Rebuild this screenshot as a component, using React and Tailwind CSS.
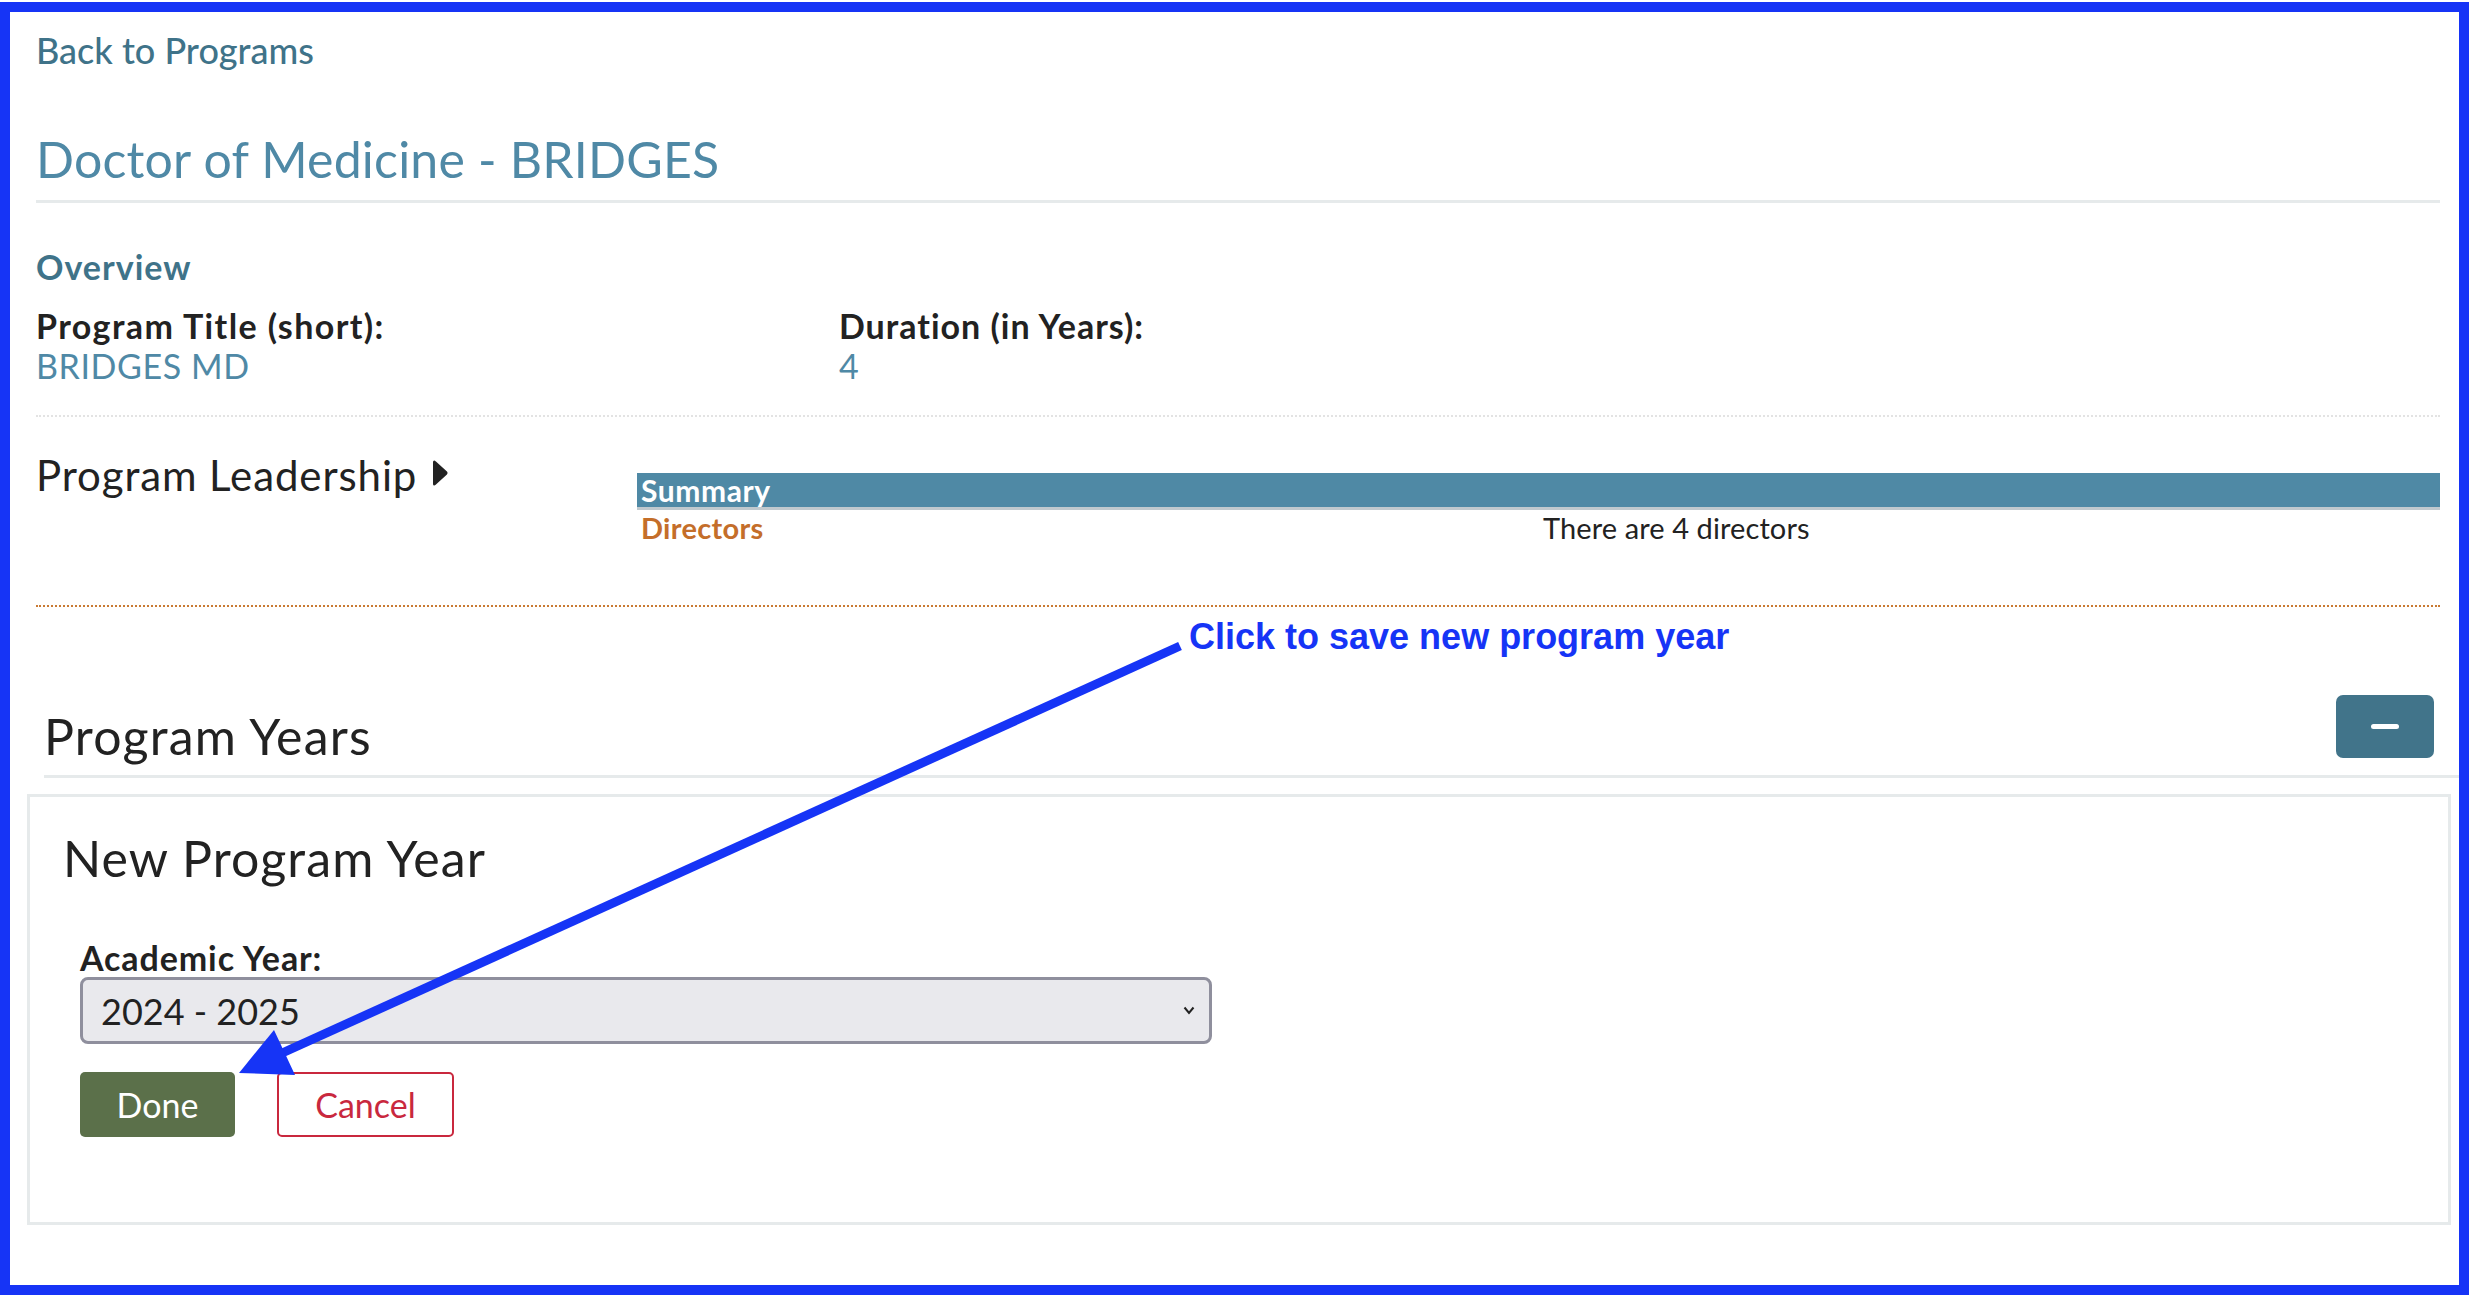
export default function App() {
  return (
    <div className="relative w-[2472px] h-[1298px] bg-white pt-[2px] font-['Lato',sans-serif] text-[#222]">
      <div className="w-[2469px] h-[1293px] border-[10px] border-[#1634f6] flex flex-col">
        {/* Top section */}
        <div className="pl-[26px] pr-[19px] flex flex-col">
          <div className="h-[76px] flex items-center">
            <span className="text-[36px] font-medium text-[#3f7389]">Back to Programs</span>
          </div>
          <div className="h-[115px] pt-[30px] flex items-center border-b-[3px] border-[#e6eaeb]">
            <span className="text-[50px] tracking-[0.2px] text-[#4f89a6] leading-none">Doctor of Medicine - BRIDGES</span>
          </div>
          <div className="mt-[38px] h-[50px] flex items-center">
            <span className="text-[34px] tracking-[1px] font-bold text-[#3f7389]">Overview</span>
          </div>
          <div className="mt-[14px] flex">
            <div className="w-[803px] flex flex-col">
              <div className="h-[40px] flex items-center text-[34px] tracking-[1.4px] font-bold">Program Title (short):</div>
              <div className="h-[41px] flex items-center text-[34px] tracking-[0.6px] text-[#4f89a6]">BRIDGES MD</div>
            </div>
            <div className="flex flex-col">
              <div className="h-[40px] flex items-center text-[34px] tracking-[1px] font-bold">Duration (in Years):</div>
              <div className="h-[41px] flex items-center text-[34px] text-[#4f89a6]">4</div>
            </div>
          </div>
          <div className="mt-[29px] border-t-2 border-dotted border-[#e3e3e3]"></div>
          <div className="h-[190px] flex border-b-2 border-dotted border-[#c97a33]">
            <div className="w-[601px] pt-[28px]">
              <div className="h-[60px] flex items-center gap-[15px]">
                <span className="text-[42px] tracking-[0.9px]">Program Leadership</span>
                <svg width="16" height="26" viewBox="0 0 16 26" className="mt-[-4px]">
                  <path d="M2 2 Q2 1 3 2 L14 12 Q15 13 14 14 L3 24 Q2 25 2 24 Z" fill="#222" stroke="#222" strokeWidth="2" strokeLinejoin="round" />
                </svg>
              </div>
            </div>
            <div className="flex-1 pt-[56px] flex flex-col">
              <div className="h-[37px] bg-[#4f89a5] border-b-[3px] border-[#c0c9ce] flex items-center pl-[4px]">
                <span className="text-[30px] tracking-[0.6px] font-bold text-white">Summary</span>
              </div>
              <div className="h-[36px] flex items-center">
                <span className="w-[906px] pl-[4px] text-[29px] tracking-[0.3px] font-bold text-[#c46e2a]">Directors</span>
                <span className="text-[29px] tracking-[0.1px]">There are 4 directors</span>
              </div>
            </div>
          </div>
        </div>

        {/* Program Years header */}
        <div className="mt-[88px] ml-[34px] pb-[17px] border-b-[3px] border-[#e6eaeb] flex items-center justify-between">
          <div className="h-[63px] pt-[19px] flex items-center text-[50px] tracking-[1.2px] leading-none">Program Years</div>
          <div className="mr-[25px] w-[98px] h-[63px] rounded-[7px] bg-[#41748a] flex items-center justify-center">
            <div className="w-[28px] h-[5px] rounded-full bg-white"></div>
          </div>
        </div>

        {/* Panel */}
        <div className="mt-[16px] ml-[17px] mr-[8px] h-[431px] border-[3px] border-[#e6eaeb] flex flex-col">
          <div className="mt-[26px] h-[70px] pl-[33px] flex items-center">
            <span className="text-[50px] tracking-[1.1px] leading-none">New Program Year</span>
          </div>
          <div className="pl-[50px] flex flex-col">
            <div className="mt-[44px] h-[40px] flex items-center text-[34px] tracking-[0.9px] font-bold">Academic Year:</div>
            <div className="w-[1132px] h-[67px] rounded-[8px] border-[3px] border-[#8f8f9d] bg-[#e9e9ed] flex items-center justify-between pl-[18px] pr-[14px]">
              <span className="text-[36px]">2024 - 2025</span>
              <svg width="12" height="9" viewBox="0 0 12 9">
                <path d="M1.5 1.5 L6 7 L10.5 1.5" fill="none" stroke="#222" strokeWidth="2" />
              </svg>
            </div>
            <div className="mt-[28px] flex gap-[42px]">
              <div className="w-[155px] h-[65px] rounded-[5px] bg-[#5b704a] flex items-center justify-center text-[34px] text-white">Done</div>
              <div className="w-[177px] h-[65px] rounded-[5px] border-2 border-[#c9283e] bg-white flex items-center justify-center text-[34px] text-[#c9283e]">Cancel</div>
            </div>
          </div>
        </div>
      </div>

      {/* Annotation overlay */}
      <svg className="absolute left-0 top-0 pointer-events-none" width="2472" height="1298" viewBox="0 0 2472 1298">
        <line x1="1180" y1="646" x2="280" y2="1054" stroke="#1634f6" strokeWidth="9" />
        <polygon points="239,1073 274,1030 295,1075" fill="#1634f6" />
      </svg>
      <div className="absolute left-[1189px] top-[615px] text-[36px] leading-[44px] font-bold text-[#1634f6] font-['Liberation_Sans',Arial,sans-serif] whitespace-nowrap">
        Click to save new program year
      </div>
    </div>
  );
}
